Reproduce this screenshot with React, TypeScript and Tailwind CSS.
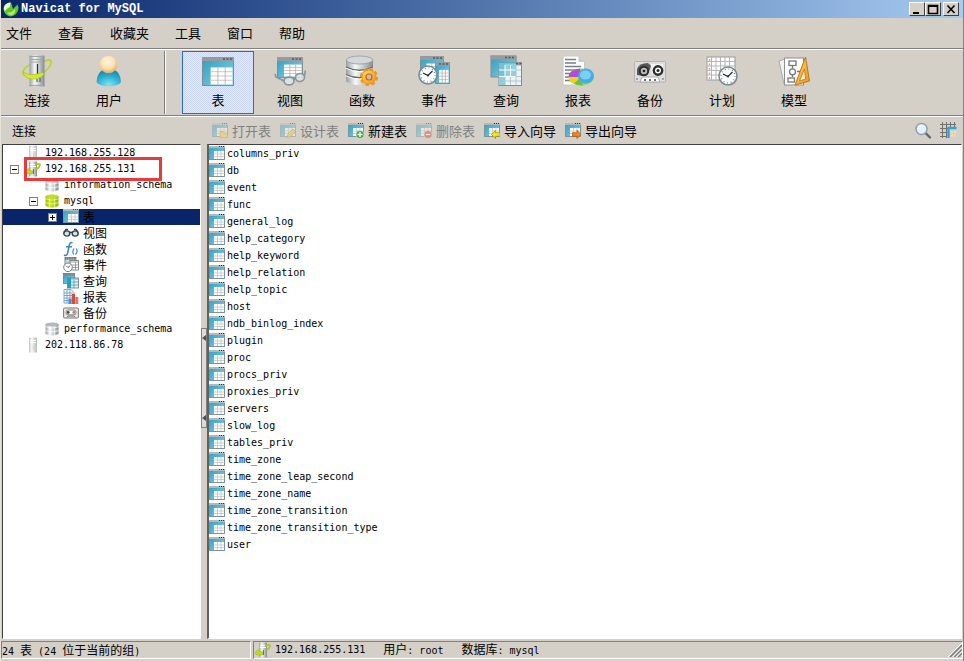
import type { ReactNode } from "react";

type Badge = "open" | "design" | "add" | "delete" | "import" | "export";

const LATIN = "font-['DejaVu_Sans_Mono','Noto_Sans_CJK_SC',monospace] text-[10px]";

const menus = ["文件", "查看", "收藏夹", "工具", "窗口", "帮助"];

const tables = [
  "columns_priv",
  "db",
  "event",
  "func",
  "general_log",
  "help_category",
  "help_keyword",
  "help_relation",
  "help_topic",
  "host",
  "ndb_binlog_index",
  "plugin",
  "proc",
  "procs_priv",
  "proxies_priv",
  "servers",
  "slow_log",
  "tables_priv",
  "time_zone",
  "time_zone_leap_second",
  "time_zone_name",
  "time_zone_transition",
  "time_zone_transition_type",
  "user",
];

/* ---------- shared gradients ---------- */

function Defs() {
  return (
    <svg width="0" height="0" className="absolute" aria-hidden="true">
      <defs>
        <linearGradient id="steel" x1="0" x2="1" y1="0" y2="0">
          <stop offset="0" stopColor="#9a9fa2" />
          <stop offset="0.35" stopColor="#f6f8f8" />
          <stop offset="0.65" stopColor="#c3c8ca" />
          <stop offset="1" stopColor="#868c8e" />
        </linearGradient>
        <linearGradient id="lime" x1="0" x2="1" y1="0" y2="0">
          <stop offset="0" stopColor="#93bd08" />
          <stop offset="0.4" stopColor="#cfe61e" />
          <stop offset="1" stopColor="#8ab307" />
        </linearGradient>
        <linearGradient id="teal" x1="0" x2="1" y1="0" y2="1">
          <stop offset="0" stopColor="#2f9fc0" />
          <stop offset="1" stopColor="#86d2e6" />
        </linearGradient>
        <radialGradient id="skin" cx="0.45" cy="0.35" r="0.65">
          <stop offset="0" stopColor="#fff8e6" />
          <stop offset="0.6" stopColor="#fbdfae" />
          <stop offset="1" stopColor="#dfae68" />
        </radialGradient>
        <radialGradient id="shirt" cx="0.5" cy="0.9" r="0.8">
          <stop offset="0" stopColor="#7fe4f6" />
          <stop offset="0.6" stopColor="#2fb0d3" />
          <stop offset="1" stopColor="#1a8bb1" />
        </radialGradient>
        <linearGradient id="gold" x1="0" x2="1" y1="0" y2="1">
          <stop offset="0" stopColor="#ffd968" />
          <stop offset="1" stopColor="#f0921a" />
        </linearGradient>
      </defs>
    </svg>
  );
}

/* ---------- 16px icons ---------- */

function BadgeMark({ badge }: { badge: Badge }) {
  if (badge === "add" || badge === "delete") {
    return (
      <g>
        <circle cx="12" cy="11.5" r="4" fill={badge === "add" ? "#2faa43" : "#dc3a34"} stroke="#fff" strokeWidth="0.5" />
        <path d={badge === "add" ? "M9.5 11.5h5M12 9v5" : "M9.8 11.5h4.4"} stroke="#fff" strokeWidth="1.4" />
      </g>
    );
  }
  if (badge === "import" || badge === "export") {
    return (
      <path
        d={badge === "import" ? "M7.5 11.5 11.5 7.3v2.4H16v3.6h-4.5v2.2Z" : "M16 11.5 12 7.3v2.4H7.5v3.6H12v2.2Z"}
        fill={badge === "import" ? "#f5e313" : "#f58a12"}
        stroke={badge === "import" ? "#9c8c00" : "#a84c00"}
        strokeWidth="0.7"
      />
    );
  }
  if (badge === "design") {
    return <path d="M7 14.5 8 11l5-5 2.500 2.500L10.500 13.500Z" fill="#f3cf3c" stroke="#a8862a" strokeWidth="0.7" />;
  }
  return <path d="M8 14.5V8.500h3l1 1.500h3.500v4.500Z" fill="#f7d34b" stroke="#bd9418" strokeWidth="0.7" />;
}

function TableIcon({ badge, faded }: { badge?: Badge; faded?: boolean }) {
  return (
    <svg viewBox="0 0 16 16" className={faded ? "size-4 shrink-0 opacity-45" : "size-4 shrink-0"} aria-hidden="true">
      <rect x="0" y="0" width="16" height="14" fill="url(#teal)" />
      <rect x="0" y="0" width="16" height="2" fill="#b4babc" />
      <path d="M10 0.500h1M12 0.500h1M14 0.500h1" stroke="#2e3437" />
      <rect x="5" y="5" width="10" height="8" fill="#fff" />
      <path d="M5 8h10M5 10.500h10M8.500 5v8M12 5v8" stroke="#b9bec0" strokeWidth="0.7" />
      <path d="M0.500 2v11.500h15V2" fill="none" stroke="#7a939c" />
      {badge && <BadgeMark badge={badge} />}
    </svg>
  );
}

function QueryIcon() {
  return (
    <svg viewBox="0 0 16 16" className="size-4 shrink-0" aria-hidden="true">
      <rect x="0.5" y="0.5" width="11" height="10" fill="url(#teal)" stroke="#6d7578" strokeWidth="0.8" />
      <path d="M0.5 1.7h11" stroke="#7d8486" strokeWidth="2" strokeDasharray="1.5 0.6" />
      <rect x="4.5" y="5" width="11" height="10" fill="#d9f1f7" stroke="#6d7578" strokeWidth="0.8" />
      <rect x="4.5" y="5" width="3.5" height="10" fill="#2b9cba" />
      <path d="M8 9h7M8 12h7M11 7v8M5 6h10" stroke="#4f9fb2" strokeWidth="0.8" />
    </svg>
  );
}

function EventIcon() {
  return (
    <svg viewBox="0 0 16 16" className="size-4 shrink-0" aria-hidden="true">
      <rect x="2" y="0.5" width="11" height="9" fill="#c6dce2" stroke="#666d70" strokeWidth="0.8" />
      <path d="M2 1.7h11" stroke="#6d7578" strokeWidth="2" strokeDasharray="1.5 0.6" />
      <rect x="7" y="3.5" width="8.5" height="9.500" fill="#fff" stroke="#666d70" strokeWidth="0.8" />
      <path d="M7 5h8.5M7 8h8.5M7 10.5h8.5M12.5 5v8" stroke="#858b8d" strokeWidth="0.8" />
      <circle cx="5" cy="10.3" r="4.3" fill="#fff" stroke="#777e81" strokeWidth="1" />
      <path d="M3 8.600l2 2 2.3-2.2" fill="none" stroke="#333" strokeWidth="0.8" />
    </svg>
  );
}

function ViewIcon() {
  return (
    <svg viewBox="0 0 16 16" className="size-4 shrink-0" fill="none" stroke="#35434c" strokeWidth="1.4" aria-hidden="true">
      <ellipse cx="3.8" cy="8.5" rx="3" ry="2.6" fill="#cfe4ee" />
      <ellipse cx="12.2" cy="8.5" rx="3" ry="2.6" fill="#cfe4ee" />
      <path d="M6.6 7.8q1.4-1 2.8 0M1 7.5 3 4.500h2M15 7.5 13 4.500h-2" />
    </svg>
  );
}

function ReportIcon() {
  return (
    <svg viewBox="0 0 16 16" className="size-4 shrink-0" aria-hidden="true">
      <path d="M1 0.500h7l3 3v10.500H1Z" fill="#fff" stroke="#6a8fae" strokeWidth="0.8" />
      <path d="M1 4h9M1 6.500h9M1 9h9M1 11.500h9M4 1v13M7 1v13" stroke="#5c95c4" strokeWidth="0.8" />
      <rect x="5.500" y="10" width="3" height="5" fill="#4a90d0" />
      <rect x="8.800" y="5" width="3.200" height="10" fill="#d8493e" />
      <rect x="12.3" y="8" width="3" height="7" fill="#e2705e" />
    </svg>
  );
}

function BackupIcon() {
  return (
    <svg viewBox="0 0 16 16" className="size-4 shrink-0" aria-hidden="true">
      <rect x="0.6" y="3" width="14.8" height="10" rx="1" fill="#e9e9e9" stroke="#777" />
      <rect x="3" y="5" width="10" height="4.8" rx="2" fill="#fff" stroke="#666" strokeWidth="0.8" />
      <circle cx="5.2" cy="7.4" r="1.4" fill="#444" />
      <circle cx="10.8" cy="7.4" r="1.4" fill="#c07a66" />
      <path d="M4 12.5l1-1.5h6l1 1.5" fill="none" stroke="#777" />
    </svg>
  );
}

function FunctionIcon() {
  return (
    <svg viewBox="0 0 16 16" className="size-4 shrink-0" fill="none" stroke="#3f86bc" aria-hidden="true">
      <path d="M9.500 2C7.500 0.400 6.500 2.600 6 5.500L4.800 11.500C4.200 14.400 3 15 1 14M3 5.800h6" strokeWidth="1.5" />
      <path d="M11 7.500q-2 3-.4 6M13.200 7.500q2.200 3-.8 6" strokeWidth="1.2" />
    </svg>
  );
}

function DatabaseIcon({ active }: { active?: boolean }) {
  const fill = active ? "url(#lime)" : "url(#steel)";
  const edge = active ? "#f2f8b8" : "#ffffff";
  return (
    <svg viewBox="0 0 16 16" className="size-4 shrink-0" aria-hidden="true">
      <path d="M1.5 3.2Q8-.4 14.5 3.2v9.8Q8 16.6 1.5 13Z" fill={fill} />
      <path d="M1.5 5.8q6.5 2.8 13 0M1.5 9.6q6.5 2.8 13 0M5.3 5v10M10.7 5v10" fill="none" stroke={edge} strokeWidth="0.8" />
      <ellipse cx="8" cy="3.3" rx="6.3" ry="1.9" fill={active ? "#c3dd25" : "#b4b9bb"} />
    </svg>
  );
}

function ServerIcon({ active }: { active?: boolean }) {
  return (
    <svg viewBox="0 0 16 16" className="size-4 shrink-0" aria-hidden="true">
      <g opacity={active ? 1 : 0.6}>
        <rect x="4" y="0.5" width="8" height="15" fill="url(#steel)" />
        <path d="M5 3.5h6M5 5.5h6" stroke="#fff" />
        <path d="M8.5 8v5" stroke={active ? "#6c7274" : "#b2b6b7"} />
      </g>
      {active && (
        <g>
          <path d="M4 7.500Q.5 8.500.3 11.200.5 13.800 7.500 12.800V9.800Q4.500 10.400 4 7.500Z" fill="#bedb1e" stroke="#93b30c" strokeWidth="0.5" />
          <path d="M10 3.8Q15 1.800 15 4q-.3 2.3-3.6 4.2" fill="none" stroke="#a9c916" strokeWidth="1.8" />
        </g>
      )}
    </svg>
  );
}

/* ---------- 32px toolbar icons ---------- */

function Big({ children }: { children: ReactNode }) {
  return (
    <svg viewBox="0 0 32 32" className="size-8" aria-hidden="true">
      {children}
    </svg>
  );
}

function WindowShape({ x, y, w, h }: { x: number; y: number; w: number; h: number }) {
  const left = x + w * 0.27;
  const top = y + h * 0.36;
  const cw = (x + w - 1.5 - left) / 3;
  const ch = (y + h - 1.5 - top) / 4;
  return (
    <g>
      <rect x={x + 0.5} y={y + 0.5} width={w - 1} height={h - 1} fill="url(#teal)" stroke="#858c8f" />
      <rect x={x} y={y} width={w} height="4" fill="#959b9e" />
      <path d={`M${x + w - 11} ${y + 2}h10`} stroke="#555c5f" strokeWidth="1.6" strokeDasharray="2 1.5" />
      <rect x={left} y={top} width={cw * 3} height={ch * 4} fill="#fff" />
      <path
        d={`M${left} ${top + ch}h${cw * 3}M${left} ${top + ch * 2}h${cw * 3}M${left} ${top + ch * 3}h${cw * 3}`}
        stroke="#c9b5ae"
        strokeWidth="0.8"
      />
      <path d={`M${left + cw} ${top}v${ch * 4}M${left + cw * 2} ${top}v${ch * 4}`} stroke="#a9adaf" strokeWidth="0.8" />
    </g>
  );
}

function ClockShape({ cx, cy, r }: { cx: number; cy: number; r: number }) {
  return (
    <g>
      <circle cx={cx} cy={cy} r={r} fill="#fafdff" stroke="#788996" strokeWidth="1.6" />
      <circle cx={cx} cy={cy} r={r - 2} fill="none" stroke="#667" strokeWidth="1.2" strokeDasharray="0.8 2.9" />
      <path d={`M${cx - 5} ${cy - 2}l5 2.5 4.5-4.5`} fill="none" stroke="#222b33" strokeWidth="1.2" />
      <circle cx={cx} cy={cy + 0.4} r="1" fill="#222b33" />
    </g>
  );
}

function BigConnection() {
  return (
    <Big>
      <path d="M10 9Q1 14 2 18.5 3 22 12 21M21 7Q30 3 30 7q0 6-10 12" fill="none" stroke="#b9d433" strokeWidth="1.8" />
      <rect x="8.5" y="0.5" width="15" height="31" fill="url(#steel)" />
      <path d="M8.5 1.5h15M10 4.5h12M10 7h12M8.5 30.5h15" stroke="#9fa5a7" />
      <path d="M16.5 9v12" stroke="#333" strokeWidth="1.2" />
      <path d="M2.2 16.5Q5 20 12 19.6q5-.6 9-2.300l2 2.300Q18 24.500 10.5 24 2.5 23 2.2 16.5Z" fill="#d6e72f" stroke="#a5bf16" strokeWidth="0.6" />
      <path d="M16 24v3M19 23v4" stroke="#42484a" />
    </Big>
  );
}

function BigUser() {
  return (
    <Big>
      <path d="M3.5 27Q4 16 12 14.5h7.5Q27.5 16 28 27q-2 4-12.2 4.3Q5.5 31 3.5 27Z" fill="url(#shirt)" />
      <circle cx="15.5" cy="9.5" r="8.8" fill="url(#skin)" />
    </Big>
  );
}

function BigTable() {
  return (
    <Big>
      <WindowShape x={0} y={2} w={32} h={29} />
    </Big>
  );
}

function BigView() {
  return (
    <Big>
      <WindowShape x={3} y={2} w={26} h={21} />
      <g fill="#dfe6e8" fillOpacity="0.8" stroke="#8b9396" strokeWidth="1.6">
        <ellipse cx="15" cy="26" rx="5" ry="3.9" />
        <ellipse cx="26" cy="22.5" rx="4.6" ry="3.9" transform="rotate(-20 26 22.5)" />
        <path d="M20 25q.6-2 2-2M10 26l-8-4-1-3M30.5 21l.8-5.5" fill="none" />
      </g>
    </Big>
  );
}

function BigFunction() {
  return (
    <Big>
      <path d="M0 5.5Q13-2 27 5.5v21Q13 34 0 26.5Z" fill="url(#steel)" />
      <path d="M0 12q13.5 6.5 27 0M0 19.5q13.5 6.5 27 0" fill="none" stroke="#636a6c" strokeWidth="1.3" />
      <path d="M0 13.3q13.5 6.5 27 0M0 20.8q13.5 6.5 27 0" fill="none" stroke="#fafafa" />
      <ellipse cx="13.5" cy="5" rx="13.2" ry="4" fill="#d3d8da" stroke="#929a9d" strokeWidth="0.8" />
      <circle cx="23" cy="22" r="7.8" fill="none" stroke="#f09416" strokeWidth="2.6" strokeDasharray="3.5 2.6" />
      <circle cx="23" cy="22" r="7" fill="url(#gold)" stroke="#f09416" />
      <circle cx="23" cy="22" r="3" fill="#b8c0c8" stroke="#c5690e" strokeWidth="1.2" />
    </Big>
  );
}

function BigEvent() {
  return (
    <Big>
      <WindowShape x={2} y={1} w={24} h={21} />
      <WindowShape x={17} y={7} w={15} h={22} />
      <ClockShape cx={10} cy={20} r={9} />
    </Big>
  );
}

function BigQuery() {
  return (
    <Big>
      <rect x="1" y="1" width="25" height="21" fill="url(#teal)" stroke="#858c8f" />
      <rect x="0.5" y="0.5" width="26" height="4" fill="#959b9e" />
      <rect x="9" y="8" width="22.5" height="22.5" fill="#e8f6fa" stroke="#858c8f" />
      <rect x="9" y="8" width="6" height="22" fill="#8ccfdf" />
      <rect x="9" y="8" width="17" height="14" fill="#5dbdd4" fillOpacity="0.65" />
      <rect x="26" y="7" width="6" height="3.5" fill="#959b9e" />
      <path d="M9 15h17M9 21.5h17M15 10v12M20.5 10v12" stroke="#fff" />
      <path d="M26 15h5M26 21.5h5M15 26h16M15 22v8M20.5 22v8M26 10v20" stroke="#a9bcc2" strokeWidth="0.8" />
      <path d="M15 2.5h10M26 8.5h6" stroke="#555c5f" strokeWidth="1.5" strokeDasharray="2 1.5" />
    </Big>
  );
}

function BigReport() {
  return (
    <Big>
      <path d="M1 1h15.5l6 6v23H1Z" fill="#fff" stroke="#c5c8ca" />
      <path d="M16.5 1v6h6Z" fill="#c8cccf" />
      <path d="M3 4.5h11M3 8h11M3 11.5h16M3 15h13M3 18.5h5M3 22h4M3 25.5h5" stroke="#7b8083" strokeWidth="1.3" />
      <ellipse cx="19" cy="22" rx="12.5" ry="8.5" fill="#a3d63c" />
      <path d="M19 22 6.5 22Q7 14.5 18 13.5Z" fill="#b14fd0" />
      <path d="M19 22 6.5 22Q7 26 12 28.8Z" fill="#f2cf26" />
      <path d="M19 22 12 28.8q4 2 9 1.5Z" fill="#6cc343" />
      <ellipse cx="24" cy="21" rx="8" ry="7.4" fill="#3eb0e6" />
      <ellipse cx="23.5" cy="20" rx="5.5" ry="4.5" fill="#9bdcf7" fillOpacity="0.7" />
    </Big>
  );
}

function BigBackup() {
  return (
    <Big>
      <rect x="0.5" y="6.5" width="31" height="20.5" rx="1" fill="#dedede" stroke="#b3b3b3" />
      <path d="M3 20V14Q5 8 14 8L17 11Q15 19 9 21Z" fill="#5a5653" />
      <path d="M17 9h12v10H18Z" fill="#f5f5f5" />
      <circle cx="10" cy="16" r="4.2" fill="#bbb" stroke="#2d2d2d" strokeWidth="2" />
      <circle cx="24" cy="15.5" r="4.2" fill="#fff" stroke="#2d2d2d" strokeWidth="2.4" />
      <circle cx="10" cy="16" r="1.3" fill="#222" />
      <circle cx="24" cy="15.5" r="1.5" fill="#222" />
      <path d="M6 27l2-5h16l2 5Z" fill="#fff" stroke="#aaa" />
      <path d="M10 25h2M15 25h2M20 25h2M2.5 24h1M28.5 24h1" stroke="#444" strokeWidth="1.5" />
    </Big>
  );
}

function BigSchedule() {
  return (
    <Big>
      <rect x="1" y="2" width="28" height="23" fill="#fff" stroke="#9a9a9a" />
      <path d="M1 6.5h28M1 11h28M1 15.5h28M1 20h28M5.5 2v23M10 2v23M14.5 2v23M19 2v23M23.5 2v23" stroke="#b5b5b5" />
      <path d="M3.5 4v20" stroke="#e8a0a0" strokeWidth="1.5" strokeDasharray="2 2.5" />
      <ClockShape cx={22} cy={21} r={9} />
    </Big>
  );
}

function BigModel() {
  return (
    <Big>
      <path d="M1 6 10 3v25l-4 1Z" fill="#f2f2f2" stroke="#aaa" />
      <rect x="6.5" y="3" width="19" height="27" fill="#fff" stroke="#8f8f8f" />
      <g fill="#fff" stroke="#777" strokeWidth="1.3">
        <rect x="11" y="6" width="7" height="4.5" />
        <path d="M14.5 11v4M14.5 19v3M19 16.5h3" />
        <circle cx="14.5" cy="16.8" r="3" />
        <rect x="10" y="23" width="6.5" height="4" />
      </g>
      <path d="M27.5 2 31.5 26 17 30Z" fill="url(#gold)" stroke="#b87814" />
      <path d="M26.5 14 27.5 24 21.5 26Z" fill="#f7f1e0" stroke="#b87814" strokeWidth="0.8" />
    </Big>
  );
}

const tools = [
  { label: "视图", icon: <BigView /> },
  { label: "函数", icon: <BigFunction /> },
  { label: "事件", icon: <BigEvent /> },
  { label: "查询", icon: <BigQuery /> },
  { label: "报表", icon: <BigReport /> },
  { label: "备份", icon: <BigBackup /> },
  { label: "计划", icon: <BigSchedule /> },
  { label: "模型", icon: <BigModel /> },
];

const actions: { label: string; badge: Badge; disabled?: boolean }[] = [
  { label: "打开表", badge: "open", disabled: true },
  { label: "设计表", badge: "design", disabled: true },
  { label: "新建表", badge: "add" },
  { label: "删除表", badge: "delete", disabled: true },
  { label: "导入向导", badge: "import" },
  { label: "导出向导", badge: "export" },
];

function ToolButton({ label, icon, active }: { label: string; icon: ReactNode; active?: boolean }) {
  return (
    <button
      type="button"
      className={
        active
          ? "flex w-[72px] shrink-0 flex-col items-center gap-1 border border-[#316ac5] bg-[repeating-conic-gradient(#cbd7f0_0_25%,#e2e8f6_0_50%)] bg-[length:2px_2px] pt-[3px]"
          : "flex w-[72px] shrink-0 flex-col items-center gap-1 border border-transparent pt-[3px]"
      }
    >
      {icon}
      <span className="leading-[18px]">{label}</span>
    </button>
  );
}

function Expander({ open }: { open: boolean }) {
  return (
    <button type="button" aria-label={open ? "折叠" : "展开"} className="size-[9px] shrink-0 border border-[#808080] bg-white">
      <svg viewBox="0 0 7 7" className="size-[7px]" stroke="#000" aria-hidden="true">
        <path d={open ? "M1 3.5h5" : "M1 3.5h5M3.5 1v5"} />
      </svg>
    </button>
  );
}

const indents = ["pl-[7px]", "pl-[26px]", "pl-[45px]"];

interface TreeRowProps {
  level: number;
  label: string;
  icon: ReactNode;
  open?: boolean;
  selected?: boolean;
}

function TreeRow({ level, label, icon, open, selected }: TreeRowProps) {
  return (
    <li className={`flex h-4 items-center ${indents[level]} ${selected ? "bg-[#0a246a]" : ""}`}>
      {open === undefined ? <span className="w-[9px] shrink-0" /> : <Expander open={open} />}
      <span className="ml-1.5 flex items-center gap-1">
        {icon}
        <span className={level === 2 ? "text-xs leading-4" : `${LATIN} leading-4`}>{label}</span>
      </span>
    </li>
  );
}

function TitleButton({ label, path, thick }: { label: string; path: string; thick?: boolean }) {
  return (
    <button
      type="button"
      aria-label={label}
      className="flex h-3.5 w-4 items-center justify-center border border-t-white border-r-[#404040] border-b-[#404040] border-l-white bg-[#d4d0c8]"
    >
      <svg viewBox="0 0 12 11" className="h-[11px] w-3" fill="none" stroke="#000" strokeWidth={thick ? 2 : 1.6} aria-hidden="true">
        <path d={path} />
      </svg>
    </button>
  );
}

export default function App() {
  return (
    <div className="flex min-h-screen flex-col overflow-hidden border-r border-l border-r-[#808080] border-l-[#e6e3dc] bg-[#d4d0c8] font-['Noto_Sans_CJK_SC',sans-serif] text-[13px] text-black">
      <Defs />

      <header className="flex h-[18px] shrink-0 items-center bg-linear-to-r from-[#0a246a] to-[#a6caf0] pr-1 pl-0.5">
        <svg viewBox="0 0 16 16" className="size-4" aria-hidden="true">
          <path d="M.5 8Q.5 2 8 1.500L10 8 14.500 3.500Q17 8.500 13 13 8 17.500 3 13.500.5 11 .5 8Z" fill="#5fc531" />
          <path d="M.8 7Q1.500 2 7.500 1.500L7 6Q4 7 2 10 .8 9 .8 7Z" fill="#e6fbc6" />
          <path d="M4 11q3.500 2 8-3 1 4-3 6-3.500.8-5-3Z" fill="#b4ea62" />
        </svg>
        <h1 className="ml-0.5 font-['Liberation_Mono',monospace] text-xs font-bold text-white">Navicat for MySQL</h1>
        <div className="ml-auto flex">
          <TitleButton label="最小化" path="M2 9h6" thick />
          <TitleButton label="最大化" path="M1.5 1.5h9v8h-9zM1 2.2h10" />
          <span className="w-0.5" />
          <TitleButton label="关闭" path="M2.5 1.5l7 7.5M9.5 1.5l-7 7.5" />
        </div>
      </header>

      <nav className="flex h-[31px] shrink-0 items-center gap-[26px] border-b border-[#808080] pl-[5px]">
        {menus.map((menu) => (
          <button key={menu} type="button">
            {menu}
          </button>
        ))}
      </nav>

      <div className="flex h-[67px] shrink-0 border-t border-b border-t-white border-b-[#808080] py-px">
        <ToolButton label="连接" icon={<BigConnection />} />
        <ToolButton label="用户" icon={<BigUser />} />
        <div className="mr-4 ml-[19px] w-0.5 shrink-0 border-r border-l border-r-white border-l-[#808080]" />
        <ToolButton label="表" icon={<BigTable />} active />
        {tools.map((tool) => (
          <ToolButton key={tool.label} label={tool.label} icon={tool.icon} />
        ))}
      </div>

      <div className="flex h-7 shrink-0 items-center border-t border-white">
        <h2 className="w-[211px] shrink-0 pl-[11px] text-xs">连接</h2>
        <div className="flex gap-[9px]">
          {actions.map((action) => (
            <button
              key={action.label}
              type="button"
              disabled={action.disabled}
              className="flex shrink-0 items-center gap-1 disabled:text-[#808080]"
            >
              <TableIcon badge={action.badge} faded={action.disabled} />
              <span className="leading-5">{action.label}</span>
            </button>
          ))}
        </div>
        <div className="ml-auto flex gap-2 pr-[5px]">
          <button type="button" aria-label="搜索">
            <svg viewBox="0 0 18 18" className="size-[18px]" aria-hidden="true">
              <path d="M11.5 11l4.5 4.5" stroke="#62686e" strokeWidth="2.4" strokeLinecap="round" />
              <circle cx="7.5" cy="7" r="5.5" fill="#e4f1fd" stroke="#8b9cb4" strokeWidth="1.4" />
              <path d="M4.5 6.5q.5-2.5 3-2.8" fill="none" stroke="#fff" strokeWidth="1.4" />
            </svg>
          </button>
          <button type="button" aria-label="网格">
            <svg viewBox="0 0 18 18" className="size-[18px]" aria-hidden="true">
              <path d="M0 2.5h16M0 6.5h8M0 10.500h7M0 14.500h7M2.500 0v16M6.500 0v16M10.500 0v5M14.500 0v5" stroke="#77706a" />
              <path d="M8.5 16V6h8" fill="none" stroke="#27a8dc" strokeWidth="2.4" />
              <path d="M11 10h5M11 13.500h5" stroke="#f2dfae" strokeWidth="2" strokeDasharray="2 1" />
            </svg>
          </button>
        </div>
      </div>

      <main className="flex flex-1">
        <aside className="relative ml-px w-[199px] shrink-0 border border-t-[#404040] border-r-white border-b-white border-l-[#404040] bg-white">
          <ul>
            <TreeRow level={0} label="192.168.255.128" icon={<ServerIcon />} />
            <TreeRow level={0} label="192.168.255.131" icon={<ServerIcon active />} open />
            <TreeRow level={1} label="information_schema" icon={<DatabaseIcon />} />
            <TreeRow level={1} label="mysql" icon={<DatabaseIcon active />} open />
            <TreeRow level={2} label="表" icon={<TableIcon />} open={false} selected />
            <TreeRow level={2} label="视图" icon={<ViewIcon />} />
            <TreeRow level={2} label="函数" icon={<FunctionIcon />} />
            <TreeRow level={2} label="事件" icon={<EventIcon />} />
            <TreeRow level={2} label="查询" icon={<QueryIcon />} />
            <TreeRow level={2} label="报表" icon={<ReportIcon />} />
            <TreeRow level={2} label="备份" icon={<BackupIcon />} />
            <TreeRow level={1} label="performance_schema" icon={<DatabaseIcon />} />
            <TreeRow level={0} label="202.118.86.78" icon={<ServerIcon />} />
          </ul>
          {/* highlight around the active connection */}
          <div className="pointer-events-none absolute top-3 left-[21px] h-6 w-[138px] border-[3px] border-[#e93a3c]" />
        </aside>

        <div className="w-1.5 shrink-0 pt-[184px]">
          <div className="flex h-[100px] flex-col items-center justify-between border border-[#808080] bg-[#dedbd4] py-1.5">
            {[0, 1].map((n) => (
              <svg key={n} viewBox="0 0 4 6" className="h-1.5 w-1" fill="#505050" aria-hidden="true">
                <path d="M4 0v6L0 3Z" />
              </svg>
            ))}
          </div>
        </div>

        <section className="mr-px flex-1 border border-l-2 border-t-[#404040] border-r-white border-b-white border-l-[#606060] bg-white">
          <ul>
            {tables.map((name) => (
              <li key={name} className="flex h-[17px] items-center gap-0.5">
                <TableIcon />
                <span className={`${LATIN} leading-4`}>{name}</span>
              </li>
            ))}
          </ul>
        </section>
      </main>

      <footer className="mt-0.5 mb-0.5 flex h-[18px] shrink-0 gap-0.5 text-xs leading-4">
        <div className="w-[250px] shrink-0 border border-t-[#808080] border-r-white border-b-white border-l-[#808080] whitespace-pre">
          <span className={LATIN}>24 </span>表<span className={LATIN}> (24 </span>位于当前的组<span className={LATIN}>)</span>
        </div>
        <div className="flex flex-1 items-center border border-t-[#808080] border-r-white border-b-white border-l-[#808080] pl-px">
          <ServerIcon active />
          <span className={`${LATIN} ml-1`}>192.168.255.131</span>
          <span className="ml-[18px] whitespace-pre">
            用户<span className={LATIN}>: root</span>
          </span>
          <span className="ml-[18px] whitespace-pre">
            数据库<span className={LATIN}>: mysql</span>
          </span>
          <svg viewBox="0 0 14 14" className="ml-auto size-3.5" aria-hidden="true">
            <path d="M2 14 14 2M6 14l8-8M10 14l4-4" stroke="#808080" strokeWidth="1.6" />
            <path d="M0 14 14 0M4.5 14 14 4.5M8.5 14 14 8.5" stroke="#fff" />
          </svg>
        </div>
      </footer>
    </div>
  );
}
